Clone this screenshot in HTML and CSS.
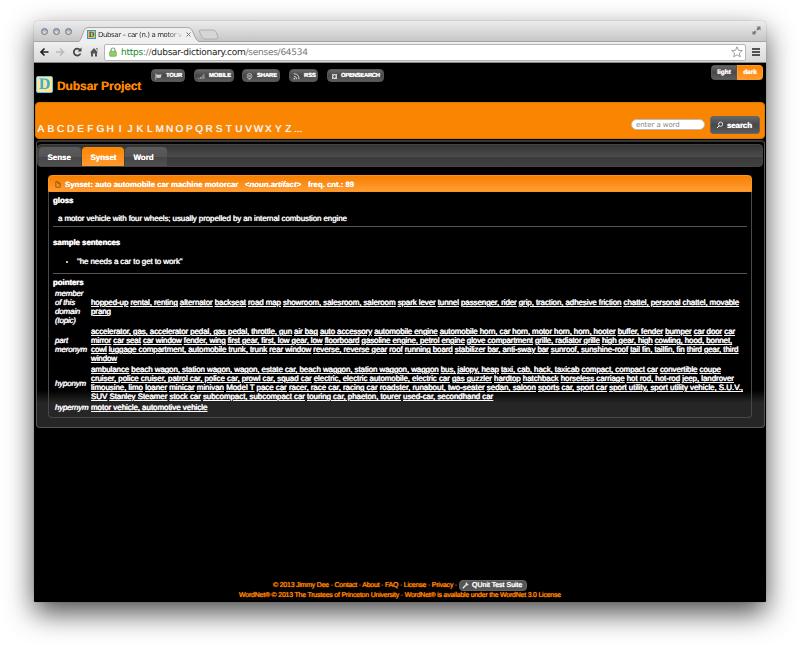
FILE: index.html
```
<!DOCTYPE html>
<html lang="en">
<head>
<meta charset="utf-8">
<title>Dubsar - car (n.)</title>
<link rel="stylesheet" href="styles.css">
</head>
<body>
<div class="window">
  <div class="titlebar">
    <div class="lights"><i></i><i></i><i></i></div>
    <div class="browser-tab">
      <svg class="tab-shape" width="124" height="15" viewBox="0 0 124 15"><path d="M0 15 C4 14 5 2 8 1 Q9 .5 11 .5 H109 Q112 .5 114 3 L118 12 Q120 15 124 15" fill="#efefef" stroke="#999" stroke-width=".8"/></svg>
      <span class="favicon">D</span><span class="tab-title">Dubsar – car (n.) a motor v</span>
      <svg class="tab-close" width="5" height="5" viewBox="0 0 5 5"><path d="M.5 .5L4.500 4.500M4.500 .5L.5 4.500" stroke="#777"/></svg>
    </div>
    <svg class="new-tab" width="22" height="11" viewBox="0 0 22 11"><path d="M2 1H15Q17 1 18 3L20 8Q20 10 18 10H7Q5 10 4 8L1.500 3Q1 1 2 1Z" fill="#d6d6d6" stroke="#a5a5a5" stroke-width=".8"/></svg>
    <svg class="expand" width="9" height="9" viewBox="0 0 9 9"><path d="M4.500 .5H8.500V4.500L7.300 3.300L5.800 4.800L4.300 3.200L5.800 1.700ZM4 8.500H.5V5L1.500 6L3 4.500L4.500 6L3 7.500Z" fill="#777"/></svg>
  </div>
  <div class="toolbar">
    <svg class="nav" width="66" height="12" viewBox="0 0 66 12" fill="none" stroke="#444" stroke-width="1.700"><path d="M10.500 6H3M6.500 2.500L3 6L6.500 9.500" stroke="#222"/><path d="M18 6H25.500M22 2.500L25.500 6L22 9.500" stroke="#bbb"/><path d="M42 3.800A3.500 3.500 0 1 0 42.500 7.500"/><path d="M43.500 1.500V5.500H39.500Z" fill="#444" stroke="none"/><path d="M52 6.500L56 2L60 6.500H59V10.500H57V7.500H55V10.500H53V6.500ZM58 2H59.500V5Z" fill="#555" stroke="none"/></svg>
    <div class="address">
      <svg width="8" height="10" viewBox="0 0 8 10"><path d="M2 5V3A2 2 0 0 1 6 3V5" fill="none" stroke="#8c9b86" stroke-width="1.200"/><rect x=".7" y="4.300" width="6.600" height="5" rx=".7" fill="#8bd065" stroke="#5f9f43" stroke-width=".6"/></svg>
      <span class="url"><b>https</b><i>://</i>dubsar-dictionary.com<i>/senses/64534</i></span>
      <svg class="star" width="12" height="12" viewBox="0 0 12 12"><path d="M6 .8L7.500 4.300L11.300 4.600L8.400 7L9.300 10.800L6 8.800L2.700 10.800L3.600 7L.7 4.600L4.500 4.300Z" fill="#fff" stroke="#888" stroke-width=".8"/></svg>
    </div>
    <svg class="menu" width="8" height="8" viewBox="0 0 8 8"><path d="M0 1H8M0 4H8M0 7H8" stroke="#222" stroke-width="1.400"/></svg>
  </div>
  <div class="page">
    <header class="header">
      <span class="logo">D</span><h1>Dubsar Project</h1>
      <nav class="actions">
        <a class="w1"><svg width="7" height="7" viewBox="0 0 7 7"><path d="M.8 .5V6.500" stroke="#ccc" stroke-width=".8"/><path d="M1.200 1.200L3.500 1.700L6.500 1.200L6 4.500L3.500 4.900L1.200 4.400Z" fill="#ccc"/></svg><span>TOUR</span></a>
        <a class="w2"><svg width="7" height="7" viewBox="0 0 7 7"><path d="M.8 6V5M2.500 6V4M4.200 6V2.500M5.900 6V1" stroke="#999" stroke-width="1.200"/></svg><span>MOBILE</span></a>
        <a class="w3"><svg width="7" height="7" viewBox="0 0 7 7"><circle cx="3.500" cy="3" r="2.500" fill="none" stroke="#ccc" stroke-width=".7"/><path d="M2 2.200H5M2 3.700H5M2.500 5L3.500 6.800L4.500 5" stroke="#ccc" stroke-width=".7" fill="none"/></svg><span>SHARE</span></a>
        <a class="w4"><svg width="7" height="7" viewBox="0 0 7 7"><path d="M.8 .8Q6 .8 6 6.200M.8 3.200Q3.600 3.200 3.600 6.200" fill="none" stroke="#ddd" stroke-width=".9"/><circle cx="1.300" cy="5.700" r=".8" fill="#ddd"/></svg><span>RSS</span></a>
        <a class="w5"><svg width="7" height="7" viewBox="0 0 7 7"><circle cx="3.500" cy="3.500" r="1.900" fill="none" stroke="#ddd" stroke-width="1.300"/><path d="M1 1L2 2M6 1L5 2M1 6L2 5M6 6L5 5" stroke="#ddd"/></svg><span>OPENSEARCH</span></a>
      </nav>
      <div class="theme"><span>light</span><span class="on">dark</span></div>
    </header>
    <section class="banner">
      <div class="letters"><span>A</span><span>B</span><span>C</span><span>D</span><span>E</span><span>F</span><span>G</span><span>H</span><span>I</span><span>J</span><span>K</span><span>L</span><span>M</span><span>N</span><span>O</span><span>P</span><span>Q</span><span>R</span><span>S</span><span>T</span><span>U</span><span>V</span><span>W</span><span>X</span><span>Y</span><span>Z</span><span>...</span></div>
      <div class="field">enter a word</div>
      <div class="search"><svg width="8" height="8" viewBox="0 0 8 8"><circle cx="4.600" cy="3.200" r="2.100" fill="none" stroke="#fff" stroke-width=".8"/><path d="M3.200 4.800L1 7" stroke="#fff"/></svg><span>search</span></div>
    </section>
    <main class="tabs">
      <div class="tabbar"><span>Sense</span><span class="on">Synset</span><span>Word</span></div>
      <article class="panel">
        <div class="panel-head"><svg width="6" height="7" viewBox="0 0 6 7"><path d="M.8 .8H3.200L5.200 2.800V6.200H.8ZM3.200 .8V2.800H5.200" fill="none" stroke="#8a4a00" stroke-width=".8"/></svg><span class="syn">Synset: auto automobile car machine motorcar</span><em>&lt;noun.artifact&gt;</em><span class="freq">freq. cnt.: 89</span></div>
        <div class="panel-body">
          <section class="gloss"><h2>gloss</h2><p>a motor vehicle with four wheels; usually propelled by an internal combustion engine</p></section>
          <section class="samples"><h2>sample sentences</h2><ul><li>"he needs a car to get to work"</li></ul></section>
          <h2 class="ptr">pointers</h2>
          <div class="row r1"><em>member<br>of this<br>domain<br>(topic)</em><div>
<p class="l1"><a>hopped-up</a> <a>rental, renting</a> <a>alternator</a> <a>backseat</a> <a>road map</a> <a>showroom, salesroom, saleroom</a> <a>spark lever</a> <a>tunnel</a> <a>passenger, rider</a> <a>grip, traction, adhesive friction</a> <a>chattel, personal chattel, movable</a></p>
<p><a>prang</a></p></div></div>
          <div class="row r2"><em>part<br>meronym</em><div>
<p class="l2"><a>accelerator, gas, accelerator pedal, gas pedal, throttle, gun</a> <a>air bag</a> <a>auto accessory</a> <a>automobile engine</a> <a>automobile horn, car horn, motor horn, horn, hooter</a> <a>buffer, fender</a> <a>bumper</a> <a>car door</a> <a>car</a></p>
<p class="l3"><a>mirror</a> <a>car seat</a> <a>car window</a> <a>fender, wing</a> <a>first gear, first, low gear, low</a> <a>floorboard</a> <a>gasoline engine, petrol engine</a> <a>glove compartment</a> <a>grille, radiator grille</a> <a>high gear, high</a> <a>cowling, hood, bonnet,</a></p>
<p class="l4"><a>cowl</a> <a>luggage compartment, automobile trunk, trunk</a> <a>rear window</a> <a>reverse, reverse gear</a> <a>roof</a> <a>running board</a> <a>stabilizer bar, anti-sway bar</a> <a>sunroof, sunshine-roof</a> <a>tail fin, tailfin, fin</a> <a>third gear, third</a></p>
<p><a>window</a></p></div></div>
          <div class="row r3"><em>hyponym</em><div>
<p class="l5"><a>ambulance</a> <a>beach wagon, station wagon, wagon, estate car, beach waggon, station waggon, waggon</a> <a>bus, jalopy, heap</a> <a>taxi, cab, hack, taxicab</a> <a>compact, compact car</a> <a>convertible</a> <a>coupe</a></p>
<p class="l6"><a>cruiser, police cruiser, patrol car, police car, prowl car, squad car</a> <a>electric, electric automobile, electric car</a> <a>gas guzzler</a> <a>hardtop</a> <a>hatchback</a> <a>horseless carriage</a> <a>hot rod, hot-rod</a> <a>jeep, landrover</a></p>
<p class="l7"><a>limousine, limo</a> <a>loaner</a> <a>minicar</a> <a>minivan</a> <a>Model T</a> <a>pace car</a> <a>racer, race car, racing car</a> <a>roadster, runabout, two-seater</a> <a>sedan, saloon</a> <a>sports car, sport car</a> <a>sport utility, sport utility vehicle, S.U.V.,</a></p>
<p class="l8"><a>SUV</a> <a>Stanley Steamer</a> <a>stock car</a> <a>subcompact, subcompact car</a> <a>touring car, phaeton, tourer</a> <a>used-car, secondhand car</a></p></div></div>
          <div class="row r4"><em>hypernym</em><div><p><a>motor vehicle, automotive vehicle</a></p></div></div>
        </div>
      </article>
    </main>
    <footer class="footer">
      <div class="f1"><span>© 2013 Jimmy Dee · Contact · About · FAQ · License · Privacy ·</span><a class="qunit"><svg width="7" height="7" viewBox="0 0 7 7"><path d="M.8 6.200L4 3" stroke="#eee" stroke-width="1.300"/><path d="M5.500 .6A1.500 1.500 0 1 0 6.500 2L5 2.200Z" fill="#eee"/></svg><span>QUnit Test Suite</span></a></div>
      <div class="f2">WordNet® © 2013 The Trustees of Princeton University · WordNet® is available under the WordNet 3.0 License</div>
    </footer>
  </div>
</div>
</body>
</html>
```
FILE: styles.css
```
* { box-sizing: border-box; }
body { margin: 0; height: 649px; overflow: hidden; background: #fff; padding: 21px 34px 0; font-family: "Liberation Sans", Arial, sans-serif; font-size: 8px; text-rendering: geometricPrecision; }
svg { display: block; flex: none; }
h1, h2, p, ul { margin: 0; padding: 0; }
.window { width: 732px; height: 581px; border-radius: 4px 4px 1px 1px; box-shadow: 0 0 1px rgba(0,0,0,.5), 0 11px 28px rgba(0,0,0,.7); display: flex; flex-direction: column; overflow: hidden; white-space: nowrap; }
.titlebar { height: 21px; flex: none; background: linear-gradient(#ececec, #c6c6c6); border-bottom: 1px solid #a5a5a5; display: flex; align-items: flex-end; }
.lights { display: flex; gap: 5px; padding: 0 0 6px 7px; width: 44px; }
.lights i { width: 7px; height: 7px; border-radius: 50%; border: 1px solid #707983; background: radial-gradient(circle at 50% 80%, #dce5ee, #8a97a5); }
.browser-tab { position: relative; width: 124px; height: 15px; margin-bottom: -1px; display: flex; align-items: center; padding-left: 9px; }
.tab-shape { position: absolute; left: 0; top: 0; }
.favicon, .logo { position: relative; font-family: "Liberation Serif", serif; font-weight: bold; text-align: center; }
.favicon { width: 9px; height: 9px; font-size: 8px; line-height: 7px; background: #f3c13b; color: #145c9c; border: 1px solid #339bcb; }
.tab-title { position: relative; margin-left: 2px; width: 85px; font: 7px/12px "DejaVu Sans", sans-serif; letter-spacing: -.4px; background: linear-gradient(90deg, #222 80%, #ddd); background-clip: text; color: transparent; }
.tab-close { position: relative; margin-left: 3px; }
.new-tab { margin: 0 0 1px -4px; }
.expand { margin: 0 5px 6px auto; }
.toolbar { height: 21px; flex: none; background: linear-gradient(#f0f0f0, #d9d9d9); border-bottom: 1px solid #888; display: flex; align-items: center; padding-left: 4px; }
.address { width: 642px; height: 17px; background: #fff; border: 1px solid #b5b5b5; border-radius: 2px; display: flex; align-items: center; padding: 0 2px 0 4px; }
.url { margin-left: 4px; padding-top: 2px; font: 9px/15px "DejaVu Sans", sans-serif; color: #222; letter-spacing: -.25px; }
.url b { color: #168a29; font-weight: normal; }
.url i { font-style: normal; color: #777; }
.star { margin-left: auto; }
.menu { margin-left: 6px; }
.page { flex: 1; background: #000; color: #fff; display: flex; flex-direction: column; padding: 0 1px; }
.header { height: 39px; flex: none; display: flex; align-items: flex-start; }
.logo { width: 17px; height: 17px; margin: 13px 0 0 1px; font-size: 16px; line-height: 16px; border: 1px solid #64c4e8; border-radius: 2px; background: #ffe694; color: #3bafd9; }
h1 { color: #ff8500; font-size: 12px; line-height: 16px; margin: 15px 0 0 4px; width: 94px; letter-spacing: -.08px; text-shadow: 0 0 .6px #ff8500; }
.actions { display: flex; gap: 9px; margin-top: 6px; }
.actions a { height: 13px; border-radius: 4px; background: linear-gradient(#666, #484848 50%, #5c5c5c); border: 1px solid #555; display: flex; align-items: center; font-size: 6px; font-weight: bold; letter-spacing: -.2px; padding: 1px 0 0 3px; gap: 4px; text-shadow: 0 0 1px #fff; }
.w1 { width: 34px; } .w2 { width: 40px; } .w3 { width: 38px; margin-left: -1px; } .w4 { width: 29px; } .w5 { width: 57px; }
.actions .w5 { gap: 3px; letter-spacing: -.35px; }
.theme { display: flex; margin: 2px 2px 0 auto; border-radius: 4px; overflow: hidden; height: 15px; font-size: 6.500px; font-weight: bold; text-align: center; line-height: 13px; text-shadow: 0 0 .8px #fff; }
.theme span { width: 26px; background: linear-gradient(#666, #484848 50%, #5c5c5c); border: 1px solid #555; }
.theme .on, .tabbar .on { background: linear-gradient(#ff8500, #ff9a30); border-color: #ff9a22; }
.banner { height: 37px; flex: none; background: #fa8500; border: 1px solid #d97a00; border-radius: 4px; display: flex; align-items: center; padding: 8px 4px 0 0; }
.letters { display: grid; grid-template-columns: repeat(27, 9.900px); font-size: 10px; line-height: 12px; color: #f5f5f5; margin-top: 11px; text-shadow: 0 0 .8px #fff; text-align: center; }
.field { width: 74px; height: 11px; margin-left: auto; border-radius: 6px; background: #fff; border: 1px solid #bbb; color: #888; font: 7px/11px "DejaVu Sans", sans-serif; letter-spacing: -.08px; padding-left: 4px; }
.search { width: 50px; height: 18px; margin: 1px 0 0 5px; border-radius: 3px; border: 1px solid #666; background: linear-gradient(#666, #484848 50%, #5c5c5c); display: flex; align-items: center; padding-left: 5px; gap: 3px; font-weight: bold; font-size: 8px; letter-spacing: -.15px; text-shadow: 0 0 .7px #fff; }
.tabs { width: 729px; height: 288px; flex: none; margin: 1px 0 0 1px; border: 1px solid #555; border-top: 2px solid #333; border-radius: 4px; padding: 2px 0 8px; background: linear-gradient(#000 0, #000 248px, #262626 261px); display: flex; flex-direction: column; }
.tabbar { width: 726px; height: 23px; flex: none; display: flex; align-items: flex-end; gap: 1px; padding-left: 1px; border: 1px solid #444; border-radius: 4px; background: linear-gradient(#333, #4c4c4c 55%, #3b3b3b 58%, #404040); }
.tabbar span { width: 42px; height: 19px; border-radius: 4px 4px 0 0; background: linear-gradient(#5b5b5b, #555 50%, #464646 51%, #505050); font-size: 8px; font-weight: bold; line-height: 21px; padding-left: 8.500px; letter-spacing: -.05px; text-shadow: 0 0 .6px #fff; }
.panel { width: 704px; height: 243px; margin: 8px 0 0 11px; border-radius: 4px; border: 1px solid #484848; border-top: 0; }
.panel-head { height: 17px; margin: 0 -1px; border-radius: 4px 4px 0 0; background: linear-gradient(#f77f00, #ff9c35); border: 1px solid #ff9518; font-size: 7.800px; font-weight: bold; letter-spacing: -.02px; display: flex; align-items: center; padding: 1px 0 0 6px; text-shadow: 0 0 .6px #fff; }
.syn { margin-left: 4px; width: 180px; } .panel-head em { width: 63px; }
.panel-body { padding: 0 4px; text-shadow: 0 0 .7px #fff; -webkit-text-stroke: .15px #fff; letter-spacing: -.108px; }
h2 { font-size: 8px; line-height: 9px; }
.gloss { height: 35px; padding-top: 4px; border-bottom: 1px solid #555; }
.gloss p { padding: 9px 0 0 5px; line-height: 9px; }
.samples { height: 47px; padding-top: 11px; border-bottom: 1px solid #555; }
.samples ul { padding: 10px 0 0 24px; line-height: 9px; }
.ptr { padding-top: 4px; height: 14px; }
.row { display: flex; align-items: center; line-height: 9px; }
.row em { width: 36px; margin-left: 2px; flex: none; letter-spacing: -.2px; }
.row a { text-decoration: underline; text-decoration-thickness: 1px; text-underline-offset: .5px; }
.row p { height: 9px; }
.l2 { letter-spacing: -.117px; } .l3 { letter-spacing: -.12px; }
.l5 { letter-spacing: -.103px; } .l6 { letter-spacing: -.083px; } .l7 { letter-spacing: -.06px; } .l8 { letter-spacing: -.08px; }
.r4 p { letter-spacing: -.06px; }
.r1 { height: 38px; } .r2 { height: 38px; } .r3 { height: 38px; } .r4 { height: 11px; }
.footer { margin-top: auto; height: 22px; color: #ff8500; font-size: 7px; letter-spacing: -.228px; text-align: center; line-height: 9px; text-shadow: 0 0 .8px #ff8500; -webkit-text-stroke: .15px; }
.f1 { display: flex; justify-content: center; align-items: center; height: 11px; gap: 2px; }
.qunit { color: #fff; background: #555; border: 1px solid #666; border-radius: 4px; height: 11px; width: 68px; display: flex; align-items: center; gap: 3px; padding-left: 2px; letter-spacing: 0; text-shadow: 0 0 .7px #fff; }
```
